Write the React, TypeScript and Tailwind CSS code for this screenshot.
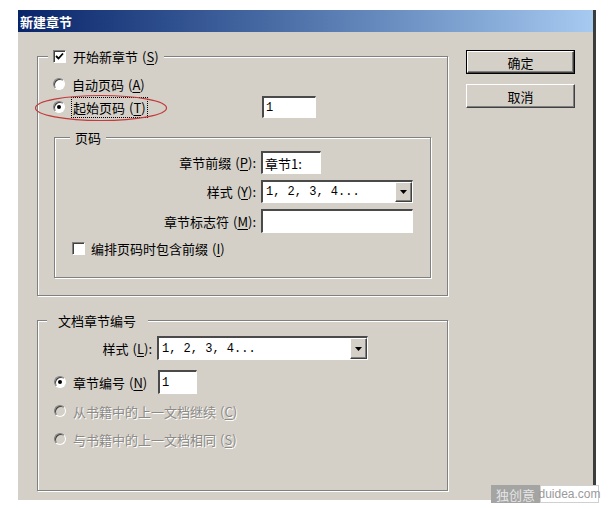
const uiFont = "font-['Noto_Sans_CJK_SC',sans-serif]";
const monoFont = "font-['Liberation_Mono','Noto_Sans_CJK_SC',monospace]";

const groupClass =
  "relative border border-[#808080] shadow-[inset_1px_1px_0_#fff,1px_1px_0_#fff]";
const sunkenClass =
  "bg-white border-t-2 border-l-2 border-r border-b border-t-[#4a4a4a] border-l-[#4a4a4a] border-r-white border-b-white";
const raisedClass =
  "bg-[#d4d0c8] border border-t-white border-l-white border-r-[#404040] border-b-[#404040] shadow-[inset_-1px_-1px_0_#808080]";

function Key({ k }: { k: string }) {
  return (
    <span className="ml-[4px]">
      (<span className="underline underline-offset-2">{k}</span>)
    </span>
  );
}

function Radio({ checked, disabled }: { checked?: boolean; disabled?: boolean }) {
  return (
    <span
      className={`flex h-[12px] w-[12px] shrink-0 items-center justify-center rounded-full border border-t-[#808080] border-l-[#808080] border-r-white border-b-white shadow-[inset_1px_1px_0_#404040] ${
        disabled ? "bg-[#d4d0c8]" : "bg-white"
      }`}
    >
      {checked && <span className="h-[4px] w-[4px] rounded-full bg-black" />}
    </span>
  );
}

function Checkbox({ checked }: { checked?: boolean }) {
  return (
    <span className="flex h-[13px] w-[13px] shrink-0 items-center justify-center border border-t-[#808080] border-l-[#808080] border-r-white border-b-white bg-white shadow-[inset_1px_1px_0_#404040]">
      {checked && (
        <svg width="9" height="9" viewBox="0 0 9 9">
          <path d="M1 4 L3.5 6.5 L8 1.5" fill="none" stroke="#000" strokeWidth="1.8" />
        </svg>
      )}
    </span>
  );
}

function Select({ width, value }: { width: string; value: string }) {
  return (
    <div className={`${sunkenClass} ${width} flex h-full items-stretch`}>
      <span className={`${monoFont} flex flex-1 items-center pl-[3px] text-[12px]`}>{value}</span>
      <span className={`${raisedClass} flex w-[17px] items-center justify-center`}>
        <svg width="7" height="4" viewBox="0 0 7 4">
          <path d="M0 0 H7 L3.5 4 Z" fill="#000" />
        </svg>
      </span>
    </div>
  );
}

function Disabled({ text, k }: { text: string; k: string }) {
  return (
    <div className="mt-[6px] flex h-[22px] items-center pl-[16px]">
      <Radio disabled />
      <span className="ml-[7px] text-[#8c8a86] [text-shadow:1px_1px_0_#fff]">
        {text}
        <Key k={k} />
      </span>
    </div>
  );
}

export default function App() {
  return (
    <div className={`${uiFont} relative h-[509px] w-[609px] overflow-hidden bg-white text-[13px] leading-none text-black`}>
      <div className="ml-[18px] mt-[10px] flex h-[490px] w-[578px] flex-col border-r-[3px] border-r-[#3c3c3c] bg-[#d4d0c8]">
        <div className="flex h-[22px] items-center bg-linear-to-r from-[#0a246a] to-[#a6caf0] pl-[2px] text-[13px] font-bold text-white">
          新建章节
        </div>

        <div className="flex pl-[19px] pt-[18px]">
          <div className="mt-[6px] w-[411px]">
            {/* 开始新章节 */}
            <div className={`${groupClass} h-[240px]`}>
              <div className="absolute -top-[8px] left-[10px] flex h-[15px] items-center bg-[#d4d0c8] px-[5px]">
                <Checkbox checked />
                <span className="ml-[7px]">
                  开始新章节
                  <Key k="S" />
                </span>
              </div>

              <div className="mt-[16px] flex h-[22px] items-center pl-[15px]">
                <Radio />
                <span className="ml-[7px]">
                  自动页码
                  <Key k="A" />
                </span>
              </div>
              <div className="mt-[1px] flex h-[22px] items-center pl-[15px]">
                <div className="flex w-[209px] items-center">
                  <Radio checked />
                  <span className="ml-[6px] border border-dotted border-black px-[1px] py-[3px]">
                    起始页码
                    <Key k="T" />
                  </span>
                </div>
                <div className={`${sunkenClass} flex h-[22px] w-[54px] items-center pl-[2px] ${monoFont} text-[12px]`}>1</div>
              </div>

              {/* 页码 */}
              <div className={`${groupClass} ml-[16px] mt-[19px] h-[141px] w-[377px]`}>
                <div className="absolute -top-[7px] left-[15px] bg-[#d4d0c8] px-[5px]">页码</div>

                <div className="mt-[13px] flex h-[23px] items-center">
                  <span className="w-[201px] text-right">
                    章节前缀
                    <Key k="P" />:
                  </span>
                  <div className={`${sunkenClass} ml-[5px] flex h-full w-[60px] items-center pl-[2px]`}>章节1:</div>
                </div>
                <div className="mt-[6px] flex h-[23px] items-center">
                  <span className="w-[201px] text-right">
                    样式
                    <Key k="Y" />:
                  </span>
                  <div className="ml-[5px] h-full">
                    <Select width="w-[152px]" value="1, 2, 3, 4..." />
                  </div>
                </div>
                <div className="mt-[6px] flex h-[24px] items-center">
                  <span className="w-[201px] text-right">
                    章节标志符
                    <Key k="M" />:
                  </span>
                  <div className={`${sunkenClass} ml-[5px] h-full w-[152px]`} />
                </div>
                <div className="mt-[6px] flex h-[18px] items-center pl-[17px]">
                  <Checkbox />
                  <span className="ml-[6px]">
                    编排页码时包含前缀
                    <Key k="I" />
                  </span>
                </div>
              </div>
            </div>

            {/* 文档章节编号 */}
            <div className={`${groupClass} mt-[24px] h-[171px]`}>
              <div className="absolute -top-[7px] left-[9px] bg-[#d4d0c8] pl-[11px] pr-[12px]">文档章节编号</div>

              <div className="mt-[15px] flex h-[24px] items-center">
                <span className="w-[114px] text-right">
                  样式
                  <Key k="L" />:
                </span>
                <div className="ml-[5px] h-full">
                  <Select width="w-[211px]" value="1, 2, 3, 4..." />
                </div>
              </div>
              <div className="mt-[10px] flex h-[24px] items-center pl-[16px]">
                <Radio checked />
                <span className="ml-[7px] w-[85px]">
                  章节编号
                  <Key k="N" />
                </span>
                <div className={`${sunkenClass} flex h-full w-[39px] items-center pl-[2px] ${monoFont} text-[12px]`}>1</div>
              </div>
              <Disabled text="从书籍中的上一文档继续" k="C" />
              <Disabled text="与书籍中的上一文档相同" k="S" />
            </div>
          </div>

          {/* 按钮 */}
          <div className="ml-[18px] flex w-[109px] flex-col">
            <div className="h-[24px] border border-black">
              <button type="button" className={`${raisedClass} h-full w-full`}>
                确定
              </button>
            </div>
            <button type="button" className={`${raisedClass} mt-[10px] h-[24px] w-full`}>
              取消
            </button>
          </div>
        </div>
      </div>

      {/* 标注 */}
      <svg className="absolute left-[34px] top-[94px]" width="134" height="28" viewBox="0 0 134 28">
        <ellipse cx="67" cy="14" rx="65.5" ry="12.5" fill="none" stroke="#c23a3a" strokeWidth="1.2" />
      </svg>

      <div className="absolute left-[491px] top-[485px] flex h-[18px]">
        <span className="flex w-[49px] items-center justify-center bg-[#a4a4a2] text-[13px] text-[#e6e6e6]">独创意</span>
        <span className="flex w-[59px] items-center justify-center border border-[#d0d0d0] bg-white font-['Liberation_Sans',sans-serif] text-[12px] text-[#9a9a9a]">
          duidea.com
        </span>
      </div>
    </div>
  );
}
